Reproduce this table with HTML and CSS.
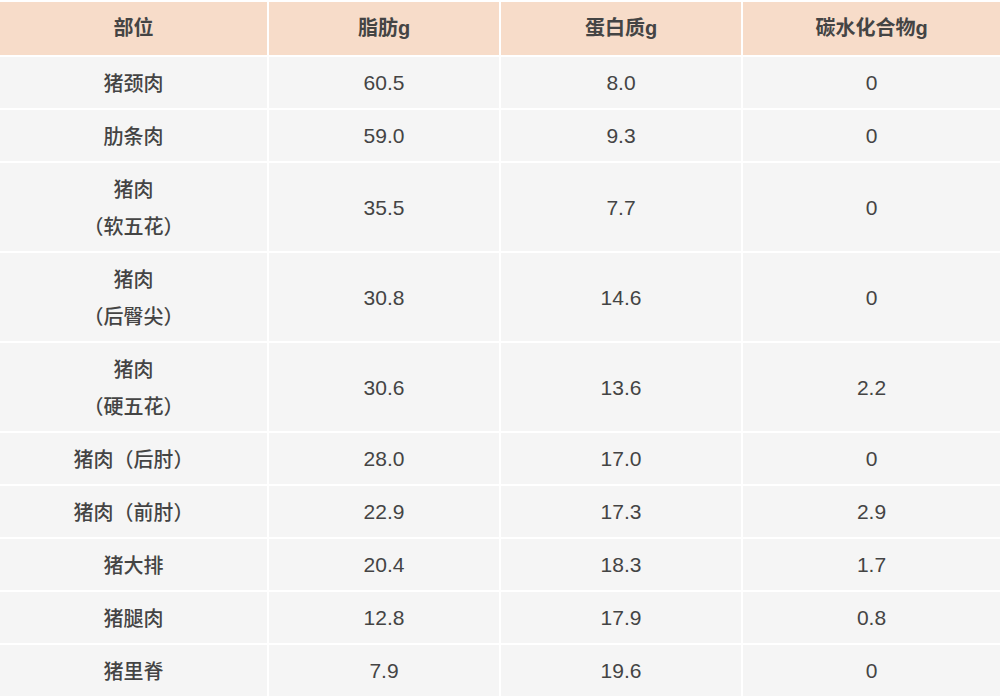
FILE: index.html
```html
<!DOCTYPE html>
<html lang="zh-CN">
<head>
<meta charset="utf-8">
<title>猪肉营养成分</title>
<link rel="stylesheet" href="styles.css">
</head>
<body>
<table class="nutri">
  <colgroup>
    <col class="c1"><col class="c2"><col class="c3"><col class="c4">
  </colgroup>
  <thead>
    <tr><th>部位</th><th>脂肪g</th><th>蛋白质g</th><th>碳水化合物g</th></tr>
  </thead>
  <tbody>
    <tr><td>猪颈肉</td><td class="num">60.5</td><td class="num">8.0</td><td class="num">0</td></tr>
    <tr><td>肋条肉</td><td class="num">59.0</td><td class="num">9.3</td><td class="num">0</td></tr>
    <tr><td>猪肉<br>（软五花）</td><td class="num">35.5</td><td class="num">7.7</td><td class="num">0</td></tr>
    <tr><td>猪肉<br>（后臀尖）</td><td class="num">30.8</td><td class="num">14.6</td><td class="num">0</td></tr>
    <tr><td>猪肉<br>（硬五花）</td><td class="num">30.6</td><td class="num">13.6</td><td class="num">2.2</td></tr>
    <tr><td>猪肉（后肘）</td><td class="num">28.0</td><td class="num">17.0</td><td class="num">0</td></tr>
    <tr><td>猪肉（前肘）</td><td class="num">22.9</td><td class="num">17.3</td><td class="num">2.9</td></tr>
    <tr><td>猪大排</td><td class="num">20.4</td><td class="num">18.3</td><td class="num">1.7</td></tr>
    <tr><td>猪腿肉</td><td class="num">12.8</td><td class="num">17.9</td><td class="num">0.8</td></tr>
    <tr><td>猪里脊</td><td class="num">7.9</td><td class="num">19.6</td><td class="num">0</td></tr>
  </tbody>
</table>
</body>
</html>
```

FILE: styles.css
```css
html, body {
  margin: 0;
  padding: 0;
  background: #f5f5f5;
}
body {
  font-family: "Liberation Sans", "Noto Sans CJK SC", sans-serif;
  color: #444444;
}
.nutri {
  width: 1000px;
  border-collapse: collapse;
  table-layout: fixed;
}
.c1 { width: 268px; }
.c2 { width: 232px; }
.c3 { width: 242px; }
.c4 { width: 258px; }
.nutri th,
.nutri td {
  border: 2px solid #ffffff;
  text-align: center;
  vertical-align: middle;
}
.nutri th {
  background: #f7dcc9;
  font-size: 20px;
  font-weight: bold;
  line-height: 37px;
  padding: 8px 0;
  color: #444444;
}
.nutri td {
  background: #f5f5f5;
  font-size: 20px;
  font-weight: 500;
  line-height: 37px;
  padding: 9px 0 5px;
}
.nutri td.num {
  font-size: 21px;
  font-weight: normal;
  padding: 7px 0;
}
.nutri tr > :first-child { border-left: 0; }
.nutri tr > :last-child { border-right: 0; }
```
